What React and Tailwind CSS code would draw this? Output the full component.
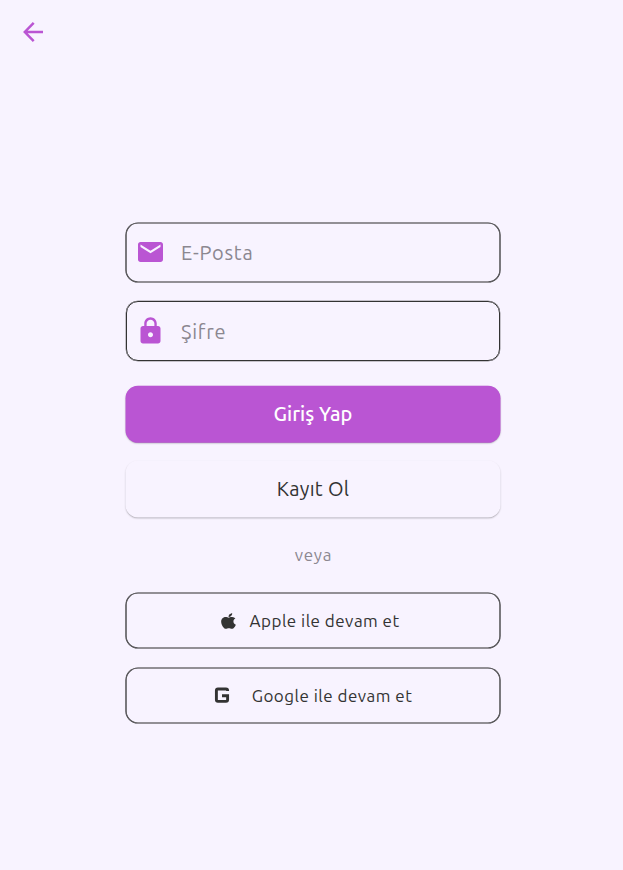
import React from 'react';

const outline =
  'rounded-[12px] shadow-[0_0_0_0.62px_#2d2d2d,inset_0_0_0_0.62px_#2d2d2d]';

function Field({ icon, label, frame }) {
  return (
    <div className={`flex items-center ${frame}`}>
      <span className="flex w-8 justify-center pb-[2px] text-[#ba55d3]">{icon}</span>
      <span className="text-[20px] leading-6 tracking-[0.75px] text-[#8b8790]">{label}</span>
    </div>
  );
}

export default function App() {
  return (
    <main className="flex h-[870px] w-full flex-col bg-[#f8f3ff] font-['Ubuntu','Noto_Sans',sans-serif] text-[#333]">
      <header className="h-[223px] pt-[16px] pl-[17px]">
        <svg className="size-8" viewBox="0 0 32 32" fill="none" stroke="#ba55d3" strokeWidth="2.5">
          <path d="M26 16H8M16.7 6.8L7.8 16L16.7 25.2" />
        </svg>
      </header>
      <div className="ml-[126px] flex w-[374px] flex-col">
        <Field
          label="E-Posta"
          frame={`h-[59px] gap-[14.6px] pl-[8.4px] ${outline}`}
          icon={
            <svg className="size-[30px]" viewBox="-0.4 0 24 24" fill="currentColor">
              <path d="M20 4H4c-1.1 0-1.99.9-1.99 2L2 18c0 1.1.9 2 2 2h16c1.1 0 2-.9 2-2V6c0-1.1-.9-2-2-2zm0 4l-8 5-8-5V6l8 5 8-5v2z" />
            </svg>
          }
        />
        <Field
          label="Şifre"
          frame="mt-[19px] h-[60px] gap-[14.6px] rounded-[12px] border border-[#333] pt-[2px] pl-[7.4px] shadow-[0_0_0_0.25px_#333]"
          icon={
            <svg className="size-[30px]" viewBox="-0.4 0 24 24" fill="currentColor">
              <path d="M18 8h-1V6c0-2.76-2.24-5-5-5S7 3.24 7 6v2H6c-1.1 0-2 .9-2 2v10c0 1.1.9 2 2 2h12c1.1 0 2-.9 2-2V10c0-1.1-.9-2-2-2zm-6 9c-1.1 0-2-.9-2-2s.9-2 2-2 2 .9 2 2-.9 2-2 2zm3.1-9H8.9V6c0-1.71 1.39-3.1 3.1-3.1 1.71 0 3.1 1.39 3.1 3.1v2z" />
            </svg>
          }
        />
        <button className="mt-[25px] h-14 rounded-[12px] bg-[#ba55d3] text-[20px] font-medium text-white shadow-[0_0.3px_0_0.5px_#ba55d3,0_1px_2px_rgba(0,0,0,0.45)]">
          Giriş Yap
        </button>
        <button className="mt-[19px] h-14 rounded-[12px] bg-[#f8f3ff] text-[20px] tracking-[0.3px] shadow-[0_0_0_0.5px_#f8f3ff,0_1px_2px_rgba(0,0,0,0.4)]">
          Kayıt Ol
        </button>
        <p className="mt-[26px] h-6 pl-[1px] text-center text-[17px] leading-6 tracking-[0.7px] text-[#8b8790]">veya</p>
        <button className={`mt-[26px] flex h-[55px] items-center pl-[94.5px] ${outline}`}>
          <svg className="h-[18px] w-[15px]" viewBox="0 0 384 512" preserveAspectRatio="none" fill="#333">
            <path d="M318.7 268.7c-.2-36.7 16.4-64.4 50-84.8-18.8-26.9-47.2-41.7-84.7-44.6-35.5-2.8-74.3 20.7-88.5 20.7-15 0-49.4-19.7-76.4-19.7C63.3 141.2 4 184.8 4 273.5q0 39.3 14.4 81.2c12.8 36.7 59 126.7 107.2 125.2 25.2-.6 43-17.9 75.8-17.9 31.8 0 48.3 17.9 76.4 17.9 48.6-.7 90.4-82.5 102.6-119.3-65.2-30.7-61.7-90-61.7-91.9zm-56.6-164.2c27.3-32.4 24.8-61.9 24-72.5-24.1 1.4-52 16.4-67.9 34.9-17.5 19.8-27.8 44.3-25.6 71.9 26.1 2 49.9-11.4 69.5-34.3z" />
          </svg>
          <span className="ml-[14px] whitespace-nowrap text-[17px] tracking-[0.48px]">Apple ile devam et</span>
        </button>
        <button className={`mt-5 flex h-[55px] items-center pl-[88px] ${outline}`}>
          <svg className="-mt-px size-4" viewBox="0 0 16 16" fill="none" stroke="#333" strokeWidth="2.9">
            <path d="M13.6 4V3.6Q13.6 2 12 2H4Q2.4 2 2.4 3.6V12.8Q2.4 14.4 4 14.4H12Q13.6 14.4 13.6 12.8V8.8H8" />
          </svg>
          <span className="ml-[21.7px] whitespace-nowrap text-[17px] tracking-[0.48px]">Google ile devam et</span>
        </button>
      </div>
    </main>
  );
}
